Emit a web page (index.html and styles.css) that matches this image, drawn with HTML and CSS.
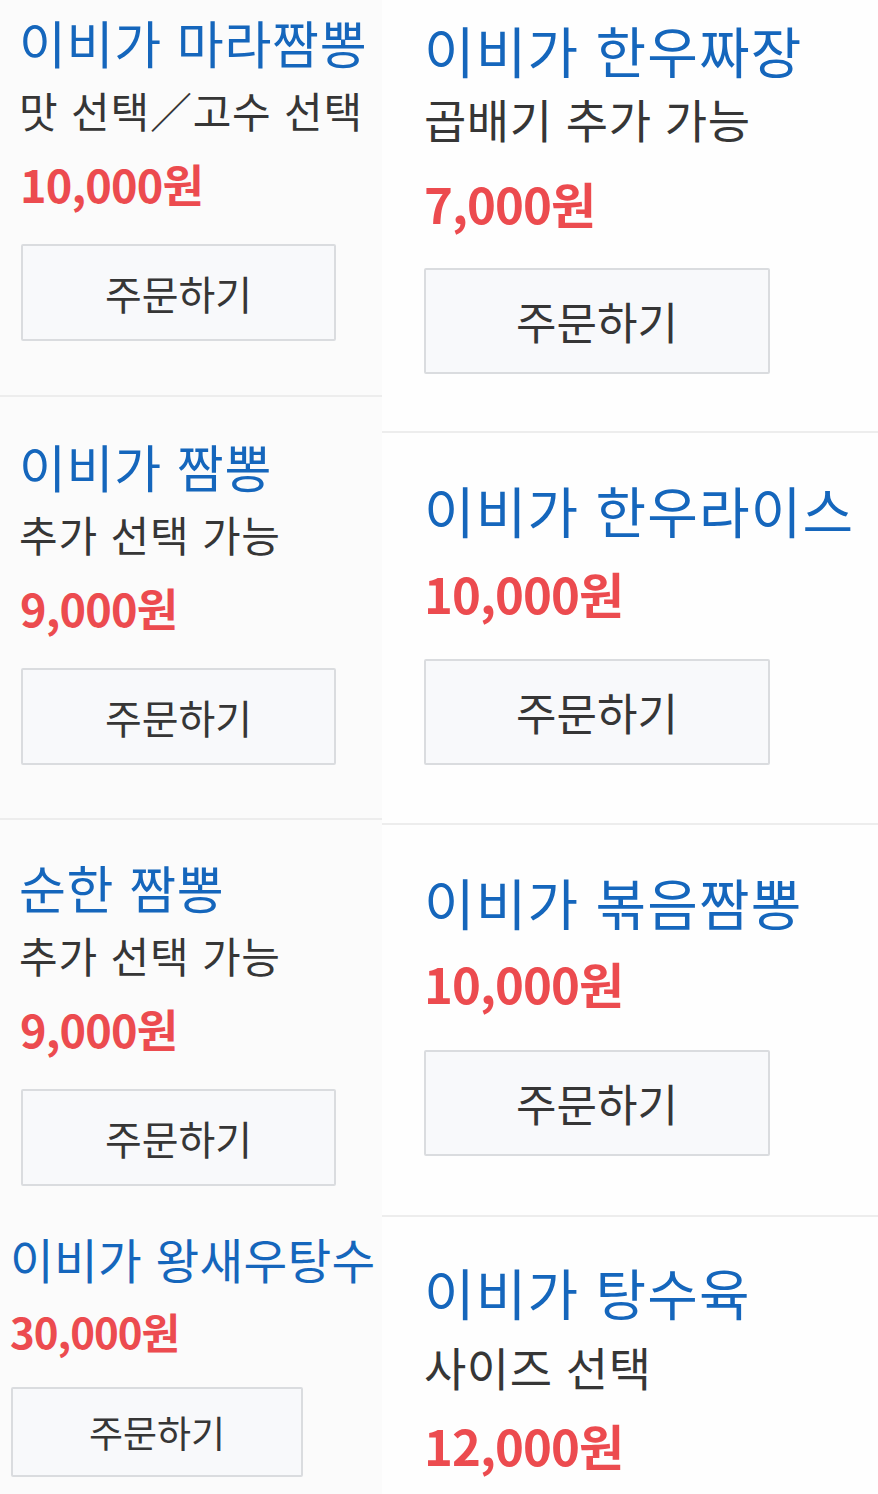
FILE: index.html
```html
<!DOCTYPE html>
<html lang="ko">
<head>
<meta charset="utf-8">
<title>메뉴</title>
<link rel="stylesheet" href="styles.css">
</head>
<body>
<div class="collage">
  <section class="col col-left">
    <article class="card card-l1">
      <h2 class="name">이비가 마라짬뽕</h2>
      <p class="desc">맛 선택／고수 선택</p>
      <p class="price">10,000원</p>
      <button class="order">주문하기</button>
    </article>
    <article class="card card-l2">
      <h2 class="name">이비가 짬뽕</h2>
      <p class="desc">추가 선택 가능</p>
      <p class="price">9,000원</p>
      <button class="order">주문하기</button>
    </article>
    <article class="card card-l3">
      <h2 class="name">순한 짬뽕</h2>
      <p class="desc">추가 선택 가능</p>
      <p class="price">9,000원</p>
      <button class="order">주문하기</button>
    </article>
    <article class="card card-l4">
      <h2 class="name">이비가 왕새우탕수</h2>
      <p class="price">30,000원</p>
      <button class="order">주문하기</button>
    </article>
  </section>
  <section class="col col-right">
    <article class="card card-r1">
      <h2 class="name">이비가 한우짜장</h2>
      <p class="desc">곱배기 추가 가능</p>
      <p class="price">7,000원</p>
      <button class="order">주문하기</button>
    </article>
    <article class="card card-r2">
      <h2 class="name">이비가 한우라이스</h2>
      <p class="price">10,000원</p>
      <button class="order">주문하기</button>
    </article>
    <article class="card card-r3">
      <h2 class="name">이비가 볶음짬뽕</h2>
      <p class="price">10,000원</p>
      <button class="order">주문하기</button>
    </article>
    <article class="card card-r4">
      <h2 class="name">이비가 탕수육</h2>
      <p class="desc">사이즈 선택</p>
      <p class="price">12,000원</p>
    </article>
  </section>
</div>
</body>
</html>
```
FILE: styles.css
```css
* { box-sizing: border-box; }
html, body { margin: 0; padding: 0; }
body {
  width: 878px;
  height: 1494px;
  overflow: hidden;
  background: #fdfdfd;
  font-family: "Noto Sans CJK KR", "Noto Sans", sans-serif;
}
.collage {
  display: flex;
  align-items: stretch;
  height: 1494px;
}
.col {
  display: flex;
  flex-direction: column;
}
.col-left {
  width: 382px;
  background: #fbfbfb;
}
.col-right {
  flex: 1;
  background: #fefefe;
}
.card {
  display: flex;
  flex-direction: column;
  align-items: flex-start;
}
.name, .desc, .price { margin: 0; white-space: nowrap; }
.name { color: #1566bc; font-weight: 400; }
.desc { color: #363636; font-weight: 400; }
.price { color: #ec4b4f; font-weight: 700; }
.order {
  font-family: inherit;
  color: #363636;
  background: #f8f9fb;
  border: 2px solid #dadcdf;
  border-radius: 2px;
  padding: 0;
  cursor: pointer;
}

/* left column scale */
.col-left .card { padding-left: 19px; border-bottom: 2px solid #ededed; }
.col-left .name { font-size: 51px; line-height: 58px; letter-spacing: 0.7px; }
.col-left .desc { font-size: 42px; line-height: 50px; margin-top: 14px; letter-spacing: 0.8px; }
.col-left .price { font-size: 45px; line-height: 53px; margin-top: 22px; margin-left: 1px; letter-spacing: -0.8px; }
.col-left .order { width: 315px; height: 97px; font-size: 40px; margin-top: 34px; margin-left: 2px; }

.card-l1 { padding-top: 13px; padding-bottom: 54px; }
.card-l2 { padding-top: 40px; padding-bottom: 53px; }
.card-l3 { padding-top: 38px; padding-bottom: 20px; }
.col-left .card-l3 { border-bottom: none; }
.col-left .card-l4 { padding-left: 10px; padding-top: 26px; border-bottom: none; }
.col-left .card-l4 .name { font-size: 47.5px; line-height: 54px; letter-spacing: 0.3px; }
.col-left .card-l4 .price { font-size: 42px; line-height: 50px; margin-top: 20px; margin-left: 0; letter-spacing: -1px; }
.col-left .card-l4 .order { width: 292px; height: 90px; font-size: 37px; margin-top: 31px; margin-left: 1px; }

/* right column scale */
.col-right .card { padding-left: 42px; border-bottom: 2px solid #ededed; }
.col-right .name { font-size: 55px; line-height: 62px; letter-spacing: 1.1px; }
.col-right .desc { font-size: 46px; line-height: 54px; margin-top: 11px; letter-spacing: 0.5px; }
.col-right .price { font-size: 49px; line-height: 57px; margin-top: 24px; letter-spacing: -0.9px; }
.col-right .order { width: 346px; height: 106px; font-size: 44px; margin-top: 38px; }

.card-r1 { padding-top: 18px; padding-bottom: 57px; }
.col-right .card-r1 .price { margin-top: 29px; }
.col-right .card-r1 .order { margin-top: 37px; }
.card-r2 { padding-top: 45px; padding-bottom: 58px; }
.card-r3 { padding-top: 45px; padding-bottom: 59px; }
.col-right .card-r3 .price { margin-top: 22px; }
.col-right .card-r3 .order { margin-top: 39px; }
.col-right .card-r4 { padding-top: 43px; border-bottom: none; }
.col-right .card-r4 .desc { margin-top: 17px; }
.col-right .card-r4 .price { margin-top: 23px; }
```
